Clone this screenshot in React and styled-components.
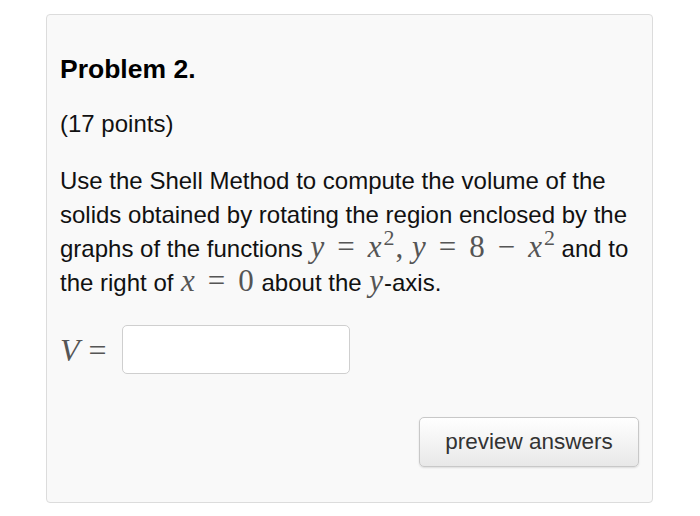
import React from "react";
import styled, { createGlobalStyle } from "styled-components";

const Global = createGlobalStyle`
  html, body { margin: 0; padding: 0; background: #fff; }
  body { font-family: "Liberation Sans", Arial, sans-serif; color: #111; }
`;

const Page = styled.div`
  padding: 14px 47px 13px 46px;
`;

const Card = styled.div`
  box-sizing: border-box;
  height: 489px;
  background: #f9f9f9;
  border: 1px solid #dcdcdc;
  border-radius: 4px;
  padding: 38px 13px 0 13px;
  display: flex;
  flex-direction: column;
`;

const Title = styled.h3`
  margin: 0;
  font-size: 26.5px;
  line-height: 32px;
  font-weight: bold;
  color: #000;
`;

const Para = styled.p`
  margin: ${(p) => p.$mt || 0}px 0 0 0;
  font-size: 24px;
  line-height: ${(p) => p.$lh || 26}px;
  color: #111;
  white-space: nowrap;
`;

const M = styled.span`
  font-family: "Liberation Serif", "Times New Roman", serif;
  font-style: ${(p) => (p.$up ? "normal" : "italic")};
  font-size: ${(p) => p.$size || 31}px;
  line-height: 0;
  color: #555;
  padding: 0 ${(p) => p.$pad ?? 1}px;
`;

const Op = styled.span`
  font-family: "Liberation Serif", "Times New Roman", serif;
  font-size: ${(p) => p.$size || 31}px;
  line-height: 0;
  color: #555;
  padding: 0 ${(p) => p.$pad ?? 12}px;
`;

const Sup = styled.sup`
  font-family: "Liberation Serif", "Times New Roman", serif;
  font-size: 22px;
  color: #555;
  line-height: 0;
  vertical-align: 12px;
  padding-left: 1px;
`;

const AnswerRow = styled.div`
  margin-top: 25px;
  display: flex;
  align-items: center;
`;

const AnswerLabel = styled.span`
  display: flex;
  align-items: center;
  width: 62px;
  line-height: 1;
`;

const Input = styled.input`
  box-sizing: border-box;
  width: 228px;
  height: 49px;
  border: 1px solid #cfcfcf;
  border-radius: 5px;
  background: #fff;
  font-size: 20px;
  outline: none;
`;

const Actions = styled.div`
  margin-top: 43px;
  display: flex;
  justify-content: flex-end;
`;

const Button = styled.button`
  box-sizing: border-box;
  width: 220px;
  height: 50px;
  border: 1px solid #c8c8c8;
  border-radius: 5px;
  background: linear-gradient(#ffffff, #e8e8e8);
  box-shadow: 0 1px 2px rgba(0, 0, 0, 0.12);
  font-family: "Liberation Sans", Arial, sans-serif;
  font-size: 22.5px;
  color: #333;
  cursor: pointer;
`;

export default function App() {
  return (
    <>
      <Global />
      <Page>
        <Card>
          <Title>Problem 2.</Title>
          <Para $mt={26}>(17 points)</Para>
          <Para $mt={27} $lh={34}>
            Use the Shell Method to compute the volume of the
            <br />
            solids obtained by rotating the region enclosed by the
            <br />
            graphs of the functions <M>y</M>
            <Op>=</Op>
            <M>x</M>
            <Sup>2</Sup>
            <M $up>,</M> <M>y</M>
            <Op>=</Op>
            <M $up>8</M>
            <Op>−</Op>
            <M>x</M>
            <Sup>2</Sup> and to
            <br />
            the right of <M>x</M>
            <Op>=</Op>
            <M $up>0</M> about the <M>y</M>-axis.
          </Para>
          <AnswerRow>
            <AnswerLabel>
              <M $size={32} $pad={0}>V</M>
              <Op $size={32} $pad={9}>=</Op>
            </AnswerLabel>
            <Input type="text" aria-label="V" />
          </AnswerRow>
          <Actions>
            <Button>preview answers</Button>
          </Actions>
        </Card>
      </Page>
    </>
  );
}
